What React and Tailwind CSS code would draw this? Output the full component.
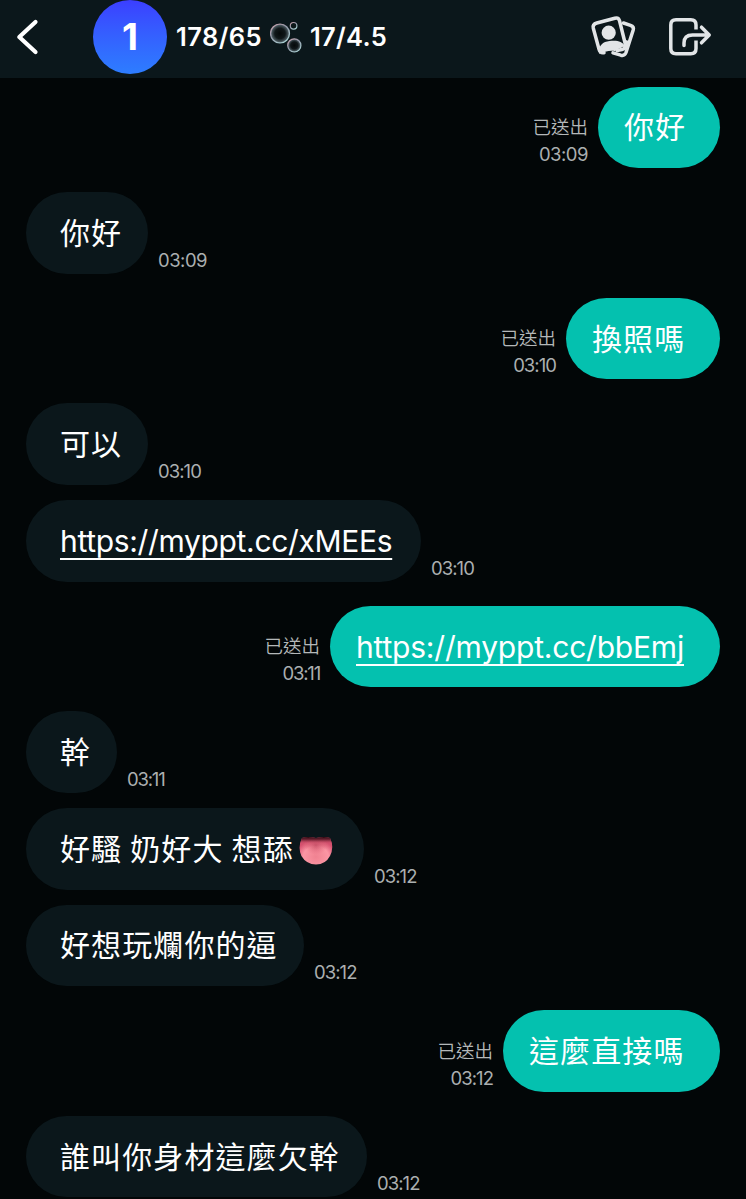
const CJK = 'font-["Inter","Noto_Sans_CJK_TC",sans-serif]';

function BackIcon() {
  return (
    <svg className="ml-[14px] h-[44px] w-[28px]" viewBox="0 0 28 44" fill="none" stroke="#fff" strokeWidth="4.2" strokeLinecap="round" strokeLinejoin="round">
      <path d="M21.5 7 5.3 22l16.2 15" />
    </svg>
  );
}

function BubblesIcon() {
  return (
    <svg className="h-[34px] w-[34px]" viewBox="0 0 34 34" fill="none">
      <defs>
        <radialGradient id="orb" cx="50%" cy="50%" r="50%">
          <stop offset="0" stopColor="#05090a" />
          <stop offset=".55" stopColor="#101719" />
          <stop offset=".86" stopColor="#46545a" />
          <stop offset="1" stopColor="#8b989f" />
        </radialGradient>
        <linearGradient id="rim" x1="0" y1="0" x2=".7" y2="1">
          <stop offset="0" stopColor="#d3a5ad" />
          <stop offset=".45" stopColor="#9496a8" />
          <stop offset="1" stopColor="#a9d0d2" />
        </linearGradient>
      </defs>
      <circle cx="10" cy="13.5" r="9.5" fill="url(#orb)" stroke="url(#rim)" strokeWidth="1.2" />
      <circle cx="24.3" cy="25.4" r="6.6" fill="url(#orb)" stroke="url(#rim)" strokeWidth="1.2" />
      <circle cx="23.6" cy="5.8" r="3.3" fill="#0b1719" stroke="url(#rim)" strokeWidth="1.2" />
    </svg>
  );
}

function PhotosIcon() {
  return (
    <svg className="h-[46px] w-[48px]" viewBox="0 0 48 46" fill="none" stroke="#e2e5e7" strokeWidth="3.5" strokeLinejoin="round" strokeLinecap="round">
      <path d="M33.5 9 40.5 11.3Q44.2 12.5 43.2 16L36 38.5Q34.6 42.2 30.8 41.2L23 38.8" />
      <path d="M36.5 28 34.5 34" />
      <path d="M14 38.7Q10.2 39.4 9.1 35.6L3.3 14.2Q2.4 10.2 6.8 9L24.8 4.2Q28.6 3.2 29.6 7L35.3 30Q36 34.6 32 35.6L27 36.4" />
      <circle cx="18.7" cy="18.7" r="7.1" fill="#e2e5e7" stroke="none" />
      <path d="M9 39.8C8.4 31 13 27.8 19.5 27 27 25.8 32.5 27.6 34.6 31.6 31 34.8 27.5 34.8 25 37.2 20 36 14 38 9 39.8Z" fill="#e2e5e7" stroke="none" />
    </svg>
  );
}

function ShareIcon() {
  return (
    <svg className="h-[40px] w-[46px]" viewBox="0 0 46 40" fill="none" stroke="#e2e5e7" strokeWidth="3.5" strokeLinecap="round" strokeLinejoin="round">
      <path d="M28 12.5V8Q28 2.8 22.8 2.8H8Q2.8 2.8 2.8 8V31.6Q2.8 36.8 8 36.8H22.8Q28 36.8 28 31.6V23.5" strokeLinecap="butt" />
      <path d="M16 28.5V26Q16 18 24.5 18H41M33.5 10.2 41.2 18 33.5 25.8" />
    </svg>
  );
}

function TongueIcon() {
  return (
    <svg className="ml-[5px] mt-[4px] h-[32px] w-[34px]" viewBox="0 0 34 32">
      <defs>
        <radialGradient id="tongue" cx=".5" cy=".72" r=".62">
          <stop offset="0" stopColor="#f08291" />
          <stop offset=".62" stopColor="#fb96a4" />
          <stop offset="1" stopColor="#d95272" />
        </radialGradient>
        <radialGradient id="groove" cx=".5" cy=".3" r=".35">
          <stop offset="0" stopColor="#a92b47" stopOpacity=".55" />
          <stop offset="1" stopColor="#d74963" stopOpacity="0" />
        </radialGradient>
        <linearGradient id="shade" x1="0" y1="0" x2="0" y2="1">
          <stop offset="0" stopColor="#26080e" />
          <stop offset=".1" stopColor="#5d1c29" stopOpacity=".8" />
          <stop offset=".22" stopColor="#c34c62" stopOpacity=".3" />
          <stop offset=".45" stopColor="#d74963" stopOpacity="0" />
        </linearGradient>
      </defs>
      <path d="M3 3Q8 1 17 3Q26 1 31 3Q35.5 12 31 21Q26.5 29.5 17 29.5Q7.5 29.5 2.4 21Q-1.5 12 3 3Z" fill="url(#tongue)" />
      <path d="M3 3Q8 1 17 3Q26 1 31 3Q35.5 12 31 21Q26.5 29.5 17 29.5Q7.5 29.5 2.4 21Q-1.5 12 3 3Z" fill="url(#groove)" />
      <path d="M3 3Q8 1 17 3Q26 1 31 3Q35.5 12 31 21Q26.5 29.5 17 29.5Q7.5 29.5 2.4 21Q-1.5 12 3 3Z" fill="url(#shade)" />
    </svg>
  );
}

const stampSpacing = {
  "03:09": "tracking-[-0.5px]",
  "03:10": "tracking-[-0.95px]",
  "03:11": "tracking-[-1.2px]",
  "03:12": "tracking-[-0.95px]",
};

function Stamp({ time, sent }) {
  return (
    <div className={`flex flex-col text-[18.5px] leading-[27px] text-[#abafb0] ${CJK} ${sent ? "items-end" : ""}`}>
      {sent && <span className="font-[350] text-[#b4b8b9]">已送出</span>}
      <time className={stampSpacing[time]}>{time}</time>
    </div>
  );
}

function Message({ text, time, sent, link, tongue, width, gap }) {
  return (
    <div className={`flex shrink-0 items-end gap-[10px] ${sent ? "flex-row-reverse" : ""} ${gap}`}>
      <div
        className={`flex h-[81.5px] shrink-0 items-center whitespace-nowrap rounded-[41px] text-[30px] leading-[42px] text-white ${CJK} ${width} ${
          sent ? "bg-[#04c1af] pl-[26px]" : "bg-[#0b171b] pl-[34px]"
        }`}
      >
        {link ? (
          <a className={`underline decoration-2 underline-offset-[6px] [text-decoration-skip-ink:none] ${link}`}>{text}</a>
        ) : (
          <span className="tracking-[1.1px] [word-spacing:-1.5px]">{text}</span>
        )}
        {tongue && <TongueIcon />}
      </div>
      <Stamp time={time} sent={sent} />
    </div>
  );
}

const messages = [
  { text: "你好", time: "03:09", sent: true, width: "w-[122px]", gap: "" },
  { text: "你好", time: "03:09", width: "w-[122px]", gap: "mt-[24.1px]" },
  { text: "換照嗎", time: "03:10", sent: true, width: "w-[154px]", gap: "mt-[24.1px]" },
  { text: "可以", time: "03:10", width: "w-[122px]", gap: "mt-[24.1px]" },
  { text: "https://myppt.cc/xMEEs", time: "03:10", link: "tracking-[-0.33px]", width: "w-[395px]", gap: "mt-[15.2px]" },
  { text: "https://myppt.cc/bbEmj", time: "03:11", sent: true, link: "tracking-[-0.2px]", width: "w-[390px]", gap: "mt-[24.1px]" },
  { text: "幹", time: "03:11", width: "w-[91px]", gap: "mt-[24.1px]" },
  { text: "好騷 奶好大 想舔", time: "03:12", tongue: true, width: "w-[338px]", gap: "mt-[15.2px]" },
  { text: "好想玩爛你的逼", time: "03:12", width: "w-[278px]", gap: "mt-[15.2px]" },
  { text: "這麼直接嗎", time: "03:12", sent: true, width: "w-[217px]", gap: "mt-[24.1px]" },
  { text: "誰叫你身材這麼欠幹", time: "03:12", width: "w-[341px]", gap: "mt-[24.1px]" },
];

export default function App() {
  return (
    <div className="flex h-[1199px] w-[746px] flex-col overflow-hidden bg-[#020607]">
      <header className='flex h-[78px] shrink-0 items-start bg-[#0b171b] font-["Inter",sans-serif] font-semibold text-white'>
        <div className="flex h-[74px] w-full items-center">
          <BackIcon />
          <div className="ml-[51px] flex size-[74px] items-center justify-center rounded-full bg-linear-to-b from-[#3b3eff] to-[#2d7dff] text-[37px] font-bold">1</div>
          <div className="ml-[9px] flex items-center text-[25.5px]">
            <span className="w-[94px] tracking-[0.4px]">178/65</span>
            <BubblesIcon />
            <span className="ml-[6px] tracking-[0.3px]">17/4.5</span>
          </div>
          <div className="ml-auto mr-[32px] flex items-center gap-[30px]">
            <PhotosIcon />
            <ShareIcon />
          </div>
        </div>
      </header>
      <main className="flex flex-col px-[26px] pt-[8.7px]">
        {messages.map((message, i) => (
          <Message key={i} {...message} />
        ))}
      </main>
    </div>
  );
}
